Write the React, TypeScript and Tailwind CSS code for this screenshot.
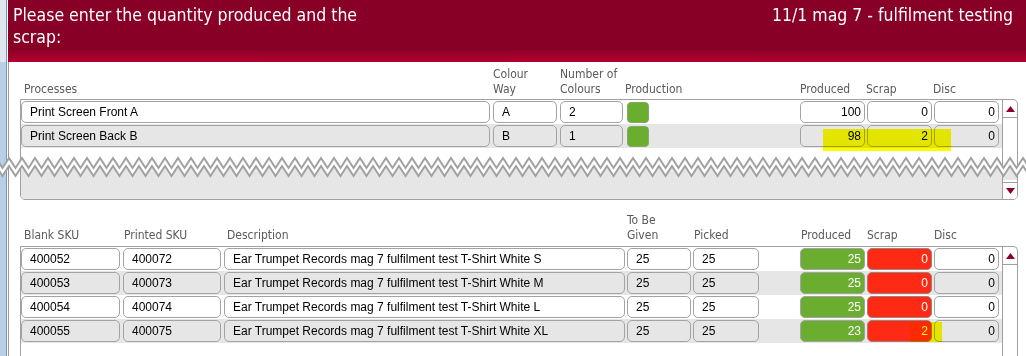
import React from "react";

const head = "font-['DejaVu_Sans_Condensed','Noto_Sans',sans-serif] text-[12px] leading-[15px] text-[#5a5a5a]";
const field = "h-[22px] my-[1px] border border-[#a3a3a3] rounded-[5px] flex items-center text-[12px] font-['Liberation_Sans',Arial,sans-serif] text-black shrink-0";

type Cell = { w: number; text: string; right?: boolean; kind?: "green" | "red" };

const Field = ({ c, alt }: { c: Cell; alt: boolean }) => {
  let tone = alt ? "bg-[#e6e6e6]" : "bg-white";
  if (c.kind === "green") tone = "bg-[#6aad2f] border-[#7f9a6a] text-white";
  if (c.kind === "red") tone = "bg-[#ff2a14] border-[#a08080] text-white";
  return (
    <div
      className={`${field} ${tone} ${c.right ? "justify-end pr-[3px]" : "pl-[8px]"}`}
      style={{ width: c.w }}
    >
      {c.text}
    </div>
  );
};

const Arrow = ({ down }: { down?: boolean }) => (
  <svg width="9" height="6" viewBox="0 0 9 6">
    <polygon points={down ? "0,0 9,0 4.5,6" : "0,6 9,6 4.5,0"} fill="#8b0030" />
  </svg>
);

const zig = () => {
  const P = 13;
  const top: string[] = [];
  const bot: string[] = [];
  const botClip: string[] = [];
  for (let i = 0, x = -4; x <= 1032; i++, x += P / 2) {
    const y = i % 2 === 0 ? 8 : 18;
    top.push(`${x},${y}`);
    bot.push(`${x},${y + 8}`);
    if (x >= 21 && x <= 1017) botClip.push(`${x},${y + 8}`);
  }
  const band = [...top, ...[...bot].reverse()].join(" ");
  const grey = ["21,30", "21,20", ...botClip, "1017,20", "1017,30"].join(" ");
  return { top: top.join(" "), bot: bot.join(" "), band, grey };
};

const ProcessRow = ({ alt, cells }: { alt: boolean; cells: string[] }) => (
  <div className={`flex h-[24px] ${alt ? "bg-[#e6e6e6]" : "bg-white"}`}>
    <Field c={{ w: 469, text: cells[0] }} alt={alt} />
    <div className="ml-[3px]"><Field c={{ w: 64, text: cells[1] }} alt={alt} /></div>
    <div className="ml-[3px]"><Field c={{ w: 63, text: cells[2] }} alt={alt} /></div>
    <div className="ml-[4px] w-[22px] h-[21px] mt-[2px] rounded-[4px] bg-[#6aad2f] border border-[#84a86a]" />
    <div className="ml-[151px]"><Field c={{ w: 65, text: cells[3], right: true }} alt={alt} /></div>
    <div className="ml-[2px]"><Field c={{ w: 65, text: cells[4], right: true }} alt={alt} /></div>
    <div className="ml-[2px]"><Field c={{ w: 65, text: cells[5], right: true }} alt={alt} /></div>
  </div>
);

const SkuRow = ({ alt, cells }: { alt: boolean; cells: string[] }) => (
  <div className={`flex h-[24px] ${alt ? "bg-[#e6e6e6]" : "bg-white"}`}>
    <Field c={{ w: 99, text: cells[0] }} alt={alt} />
    <div className="ml-[3px]"><Field c={{ w: 98, text: cells[1] }} alt={alt} /></div>
    <div className="ml-[3px]"><Field c={{ w: 401, text: cells[2] }} alt={alt} /></div>
    <div className="ml-[2px]"><Field c={{ w: 64, text: cells[3] }} alt={alt} /></div>
    <div className="ml-[2px]"><Field c={{ w: 66, text: cells[4] }} alt={alt} /></div>
    <div className="ml-[41px]"><Field c={{ w: 65, text: cells[5], right: true, kind: "green" }} alt={alt} /></div>
    <div className="ml-[2px]"><Field c={{ w: 65, text: cells[6], right: true, kind: "red" }} alt={alt} /></div>
    <div className="ml-[2px]"><Field c={{ w: 65, text: cells[7], right: true }} alt={alt} /></div>
  </div>
);

const skus = [
  ["400052", "400072", "Ear Trumpet Records mag 7 fulfilment test T-Shirt White S", "25", "25", "25", "0", "0"],
  ["400053", "400073", "Ear Trumpet Records mag 7 fulfilment test T-Shirt White M", "25", "25", "25", "0", "0"],
  ["400054", "400074", "Ear Trumpet Records mag 7 fulfilment test T-Shirt White L", "25", "25", "25", "0", "0"],
  ["400055", "400075", "Ear Trumpet Records mag 7 fulfilment test T-Shirt White XL", "25", "25", "23", "2", "0"],
];

export default function App() {
  const z = zig();
  return (
    <div className="relative w-[1026px] h-[356px] overflow-hidden bg-white flex">
      <div className="w-[6px] flex flex-col shrink-0">
        <div className="h-[62px] bg-[#dfe6ee]" />
        <div className="flex-1 bg-[#b9cfe7]" />
      </div>
      <div className="w-[1px] bg-[#7c96b2] shrink-0" />
      <div className="w-[1px] bg-white shrink-0" />
      <div className="flex-1 flex flex-col">
        <div className="h-[62px] shrink-0 flex justify-between pl-[5px] pr-[13px] pt-[4px] text-white text-[17.5px] leading-[22px] font-['DejaVu_Sans_Condensed','Noto_Sans',sans-serif] bg-[linear-gradient(to_bottom,#880026_0%,#880026_78%,#b4002f_100%)]">
          <div className="w-[350px]">Please enter the quantity produced and the scrap:</div>
          <div>11/1 mag 7 - fulfilment testing</div>
        </div>
        <div className="flex-1 border-l border-[#9a9a9a] pl-[11px]">
          {/* processes */}
          <div className={`flex items-end h-[37px] pb-[2px] ${head}`}>
            <div className="w-[472px] pl-[4px]">Processes</div>
            <div className="w-[67px] pl-[1px]">Colour<br />Way</div>
            <div className="w-[66px] pl-[1px]">Number of<br />Colours</div>
            <div className="w-[173px]">Production</div>
            <div className="w-[67px] pl-[2px]">Produced</div>
            <div className="w-[67px] pl-[1px]">Scrap</div>
            <div className="pl-[1px]">Disc</div>
          </div>
          <div className="flex w-[998px] h-[101px] border border-[#a0a0a0] rounded-bl-[5px] rounded-r-[5px] overflow-hidden">
            <div className="w-[981px] flex flex-col">
              <ProcessRow alt={false} cells={["Print Screen Front A", "A", "2", "100", "0", "0"]} />
              <ProcessRow alt={true} cells={["Print Screen Back B", "B", "1", "98", "2", "0"]} />
              <div className="h-[24px] bg-white" />
              <div className="flex-1 bg-[#e6e6e6]" />
            </div>
            <div className="flex-1 border-l border-[#a0a0a0] flex flex-col">
              <div className="h-[18px] border-b border-[#a0a0a0] flex items-center justify-center"><Arrow /></div>
              <div className="flex-1 bg-white" />
              <div className="h-[17px] border-t border-[#a0a0a0] bg-white flex items-center justify-center"><Arrow down /></div>
            </div>
          </div>
          {/* skus */}
          <div className={`flex items-end h-[46px] pb-[3px] ${head}`}>
            <div className="w-[102px] pl-[4px]">Blank SKU</div>
            <div className="w-[101px] pl-[2px]">Printed SKU</div>
            <div className="w-[403px] pl-[4px]">Description</div>
            <div className="w-[66px] pl-[1px]">To Be<br />Given</div>
            <div className="w-[107px] pl-[2px]">Picked</div>
            <div className="w-[67px] pl-[2px]">Produced</div>
            <div className="w-[67px] pl-[1px]">Scrap</div>
            <div className="pl-[1px]">Disc</div>
          </div>
          <div className="flex w-[998px] h-[120px] border-t border-l border-r border-[#a0a0a0] rounded-tr-[5px]">
            <div className="w-[981px] flex flex-col">
              {skus.map((r, i) => (
                <SkuRow key={i} alt={i % 2 === 1} cells={r} />
              ))}
            </div>
            <div className="flex-1 border-l border-[#a0a0a0] flex flex-col">
              <div className="h-[18px] border-b border-[#a0a0a0] flex items-center justify-center"><Arrow /></div>
            </div>
          </div>
        </div>
      </div>

      {/* torn edge */}
      <svg className="absolute left-0 top-[150px]" width="1026" height="30" viewBox="0 0 1026 30">
        <polygon points={z.grey} fill="#e6e6e6" />
        <line x1="1002.5" y1="18" x2="1002.5" y2="30" stroke="#a0a0a0" />
        <polygon points={z.band} fill="#ffffff" />
        <polyline points={z.top} fill="none" stroke="#a0a0a0" strokeWidth="2" />
        <polyline points={z.bot} fill="none" stroke="#a0a0a0" strokeWidth="2" />
      </svg>

      {/* highlighter marks */}
      <div className="absolute left-[823px] top-[129px] w-[128px] h-[22px] bg-[#fcfe00] mix-blend-multiply" />
      <div className="absolute left-[910px] top-[322px] w-[32px] h-[20px] bg-[#fcfe00] mix-blend-multiply" />
    </div>
  );
}
